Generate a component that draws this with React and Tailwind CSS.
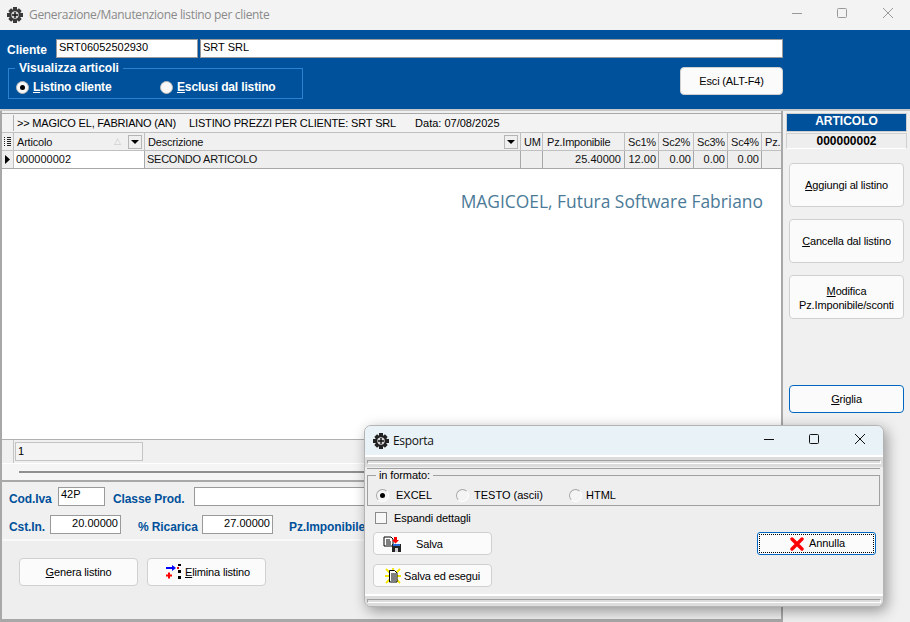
const Gear = ({ c = "text-[#222]" }) => (
  <svg viewBox="0 0 16 16" className={`w-4 h-4 shrink-0 ${c}`}>
    <g fill="currentColor">
      <circle cx="8" cy="8" r="6" />
      <rect x="6" y="0" width="4" height="16" />
      <rect x="0" y="6" width="16" height="4" />
      <rect x="6" y="0.5" width="4" height="15" transform="rotate(45 8 8)" />
      <rect x="6" y="0.5" width="4" height="15" transform="rotate(-45 8 8)" />
    </g>
    <circle cx="8" cy="8" r="3.7" fill="#d8d8d8" />
    <path d="M8 5v6M5 8h6" stroke="#111" strokeWidth="1.4" />
  </svg>
);

const U = ({ children }) => <span className="underline underline-offset-1">{children}</span>;

const Btn = ({ children, className = "" }) => (
  <div className={`flex items-center justify-center text-center bg-[#fbfbfb] border rounded-[4px] text-[11px] leading-[14px] tracking-[-0.15px] text-black ${className}`}>
    {children}
  </div>
);

const Radio = ({ on, dark }) => (
  <span className={`w-[13px] h-[13px] rounded-full shrink-0 flex items-center justify-center border ${dark ? "bg-[#f4f4f4] border-[#a8a8a8] border-r-white border-b-white" : "bg-[#f7f7f7] border-[#bbb]"}`}>
    {on && <span className="w-[5px] h-[5px] rounded-full bg-black" />}
  </span>
);

const cols = [
  ["w-[131px]", "Articolo"],
  ["w-[376px]", "Descrizione"],
  ["w-[22px]", "UM"],
  ["w-[82px]", "Pz.Imponibile"],
  ["w-[34px]", "Sc1%"],
  ["w-[35px]", "Sc2%"],
  ["w-[34px]", "Sc3%"],
  ["w-[34px]", "Sc4%"],
  ["flex-1", "Pz."],
];

const DropMini = () => (
  <span className="w-[14px] h-[14px] bg-[#efefef] border border-[#b5b5b5] flex items-center justify-center shrink-0">
    <svg viewBox="0 0 8 4" className="w-2 h-1"><path d="M0 0h8L4 4z" fill="#000" /></svg>
  </span>
);

const Groove = ({ className = "" }) => (
  <div className={`border border-[#a0a0a0] border-r-white border-b-white h-[4px] ${className}`} />
);

const Field = ({ className = "", children, right }) => (
  <div className={`h-[19px] bg-white border border-[#9a9a9a] text-[11px] leading-[15px] font-normal text-black px-[2px] ${right ? "text-right" : ""} ${className}`}>
    {children}
  </div>
);

const Label = ({ className = "", children }) => (
  <span className={`pt-[4px] tracking-[-0.1px] ${className}`}>{children}</span>
);

export default function App() {
  return (
    <div className="relative w-[910px] h-[622px] overflow-hidden bg-[#f0f0f0] text-black font-['Liberation_Sans',Arial,sans-serif]">
      {/* title bar */}
      <div className="h-[30px] flex items-center pl-[7px] bg-[#f3f3f3]">
        <Gear c="text-[#3a3a3a]" />
        <span className="ml-[6px] pb-[1px] text-[12px] text-[#8a8a8a] font-['Open_Sans',sans-serif] tracking-[-0.33px]">Generazione/Manutenzione listino per cliente</span>
        <div className="ml-auto mb-[4px] flex items-center">
          <svg viewBox="0 0 46 20" className="w-[46px] h-5"><path d="M20 10.5h10" stroke="#999" strokeWidth="1" /></svg>
          <svg viewBox="0 0 46 20" className="w-[46px] h-5"><rect x="19.5" y="5.5" width="9" height="9" rx="1" fill="none" stroke="#999" /></svg>
          <svg viewBox="0 0 46 20" className="w-[46px] h-5"><path d="M19 5l10 10M29 5L19 15" stroke="#999" /></svg>
        </div>
      </div>

      {/* blue header */}
      <div className="h-[79px] bg-[#00519b] pl-[7px] pt-[8px] pr-[127px] flex flex-col">
        <div className="flex items-center">
          <span className="w-[49px] text-white font-bold text-[12px] pt-[3px]">Cliente</span>
          <Field className="w-[142px]">SRT06052502930</Field>
          <Field className="flex-1 ml-[2px]">SRT SRL</Field>
        </div>
        <div className="flex justify-between items-start mt-[7px]">
          <fieldset className="ml-[1px] w-[295px] h-[37px] border border-[#2b82d0] pl-[6px] -mt-[4px]">
            <legend className="px-[4px] text-white font-bold text-[12px] leading-[12px]">Visualizza articoli</legend>
            <div className="flex items-center pl-[1px] pt-[4px] text-white font-bold text-[12px] tracking-[-0.15px]">
              <Radio on />
              <span className="ml-[4px] w-[127px]"><U>L</U>istino cliente</span>
              <Radio />
              <span className="ml-[4px]"><U>E</U>sclusi dal listino</span>
            </div>
          </fieldset>
          <Btn className="w-[103px] h-[28px] mt-[1px] border-[#d0d0d0]">Esci (ALT-F4)</Btn>
        </div>
      </div>

      {/* main */}
      <div className="flex h-[513px] border-t-[2px] border-[#c8c8c8]">
        {/* left column */}
        <div className="w-[783px] shrink-0 flex flex-col border-r-[2px] border-[#a8a8a8] border-l-[2px] border-b-[3px]">
          <div className="h-[19px] mt-[2px] flex items-center border-t border-[#a8a8a8] text-[11px] bg-[#f3f3f3]">
            <span className="ml-[11px] border-l border-[#b0b0b0] pl-[3px] flex tracking-[-0.2px]">
              <span>{">> MAGICO EL, FABRIANO (AN)"}</span>
              <span className="ml-[13px] tracking-[-0.15px]">LISTINO PREZZI PER CLIENTE: SRT SRL</span>
              <span className="ml-[19px] tracking-normal">Data: 07/08/2025</span>
            </span>
          </div>
          <div className="h-[19px] flex border-t border-[#c0c0c0] border-b border-[#a8a8a8] text-[11px] leading-[17px] text-[#111]">
            <div className="w-[12px] shrink-0 flex items-center justify-center border-r border-[#c0c0c0]">
              <svg viewBox="0 0 7 9" className="w-[7px] h-[9px]"><path d="M0 .5h1M3 .5h4M0 2.5h1M3 2.5h4M0 4.5h1M3 4.5h4M0 6.5h1M3 6.5h4M0 8.5h1M3 8.5h4" stroke="#222" /></svg>
            </div>
            {cols.map(([w, label], i) => (
              <div key={label} className={`${w} ${i === 8 ? "" : "shrink-0 border-r border-[#c0c0c0]"} flex items-center px-[3px] overflow-hidden`}>
                <span className={`pt-[2px] tracking-[-0.2px] ${i > 3 ? "mx-auto" : ""} ${i === 3 ? "pl-[1px]" : ""}`}>{label}</span>
                {i === 0 && <span className="ml-auto mr-[7px] text-[#c8c8c8] text-[9px]">△</span>}
                {i < 2 && <span className={i === 1 ? "ml-auto -mr-[1px]" : "-mr-[1px]"}><DropMini /></span>}
              </div>
            ))}
          </div>
          <div className="h-[18px] flex border-b border-[#a8a8a8] text-[11px] leading-[16px] text-[#111] bg-[#eeeeee]">
            <div className="w-[12px] shrink-0 flex items-center justify-center border-r border-[#c0c0c0]">
              <svg viewBox="0 0 5 9" className="w-[5px] h-[9px]"><path d="M0 0l5 4.5L0 9z" fill="#000" /></svg>
            </div>
            <div className="w-[131px] shrink-0 bg-white border-r border-[#a8a8a8] px-[2px]">000000002</div>
            <div className="w-[376px] shrink-0 border-r border-[#a8a8a8] px-[2px] tracking-[-0.25px]">SECONDO ARTICOLO</div>
            <div className="w-[22px] shrink-0 border-r border-[#a8a8a8]" />
            <div className="w-[82px] shrink-0 border-r border-[#a8a8a8] px-[3px] text-right">25.40000</div>
            <div className="w-[34px] shrink-0 border-r border-[#a8a8a8] px-[2px] text-right">12.00</div>
            <div className="w-[35px] shrink-0 border-r border-[#a8a8a8] px-[2px] text-right">0.00</div>
            <div className="w-[34px] shrink-0 border-r border-[#a8a8a8] px-[2px] text-right">0.00</div>
            <div className="w-[34px] shrink-0 border-r border-[#a8a8a8] px-[2px] text-right">0.00</div>
            <div className="flex-1" />
          </div>
          <div className="h-[270px] bg-white flex justify-end pr-[18px] pt-[20px]">
            <span className="text-[#4b7a97] text-[17.4px] leading-[24px] font-['Open_Sans',sans-serif]">MAGICOEL, Futura Software Fabriano</span>
          </div>
          <div className="h-[24px] flex items-center border-t border-[#b0b0b0] bg-[#f0f0f0]">
            <div className="w-[12px] h-full border-r border-[#c4c4c4]" />
            <div className="ml-[1px] w-[128px] h-[19px] bg-[#f3f3f3] border border-[#c4c4c4] px-[2px] text-[11px] leading-[17px]">1</div>
          </div>
          <div className="h-[19px] bg-[#f5f5f5] border-t border-white border-b-[2px] border-b-[#a8a8a8] pl-[17px] flex items-center">
            <div className="h-[2px] flex-1 bg-[#8f8f8f]" />
          </div>
          <div className="h-[57px] pl-[7px] pt-[5px] text-[#00519b] font-bold text-[12px]">
            <div className="flex items-center h-[19px]">
              <Label className="w-[49px]">Cod.Iva</Label>
              <Field className="w-[47px] !leading-[13px]">42P</Field>
              <Label className="ml-[8px] w-[81px]">Classe Prod.</Label>
              <Field className="w-[300px]" />
            </div>
            <div className="flex items-center h-[19px] mt-[9px]">
              <Label className="w-[41px]">Cst.In.</Label>
              <Field right className="w-[71px]">20.00000</Field>
              <Label className="ml-[17px] w-[64px]">% Ricarica</Label>
              <Field right className="w-[71px]">27.00000</Field>
              <Label className="ml-[16px]">Pz.Imponibile</Label>
            </div>
          </div>
          <div className="flex-1 border-t-[2px] border-[#f8f8f8] pl-[17px] pt-[17px] flex gap-[9px] items-start bg-[#eeeeee]">
            <Btn className="w-[119px] h-[28px] border-[#d0d0d0]"><span><U>G</U>enera listino</span></Btn>
            <Btn className="w-[119px] h-[28px] !justify-start pl-[17px] gap-[4px] border-[#d0d0d0]">
              <svg viewBox="0 0 16 16" className="w-4 h-4">
                <path d="M1 4h7" stroke="#0000ff" strokeWidth="2" />
                <path d="M7 1l4 3-4 3z" fill="#0000ff" />
                <path d="M1 11.5h6M4 8.5v6" stroke="#ff0000" strokeWidth="2" />
                <path d="M13 0h3v2h-3zM13 6h3v3h-3zM13 12h3v3h-3z" fill="#000" />
                <path d="M12 3h2v2h-2z" fill="#d00" />
              </svg>
              <span><U>E</U>limina listino</span>
            </Btn>
          </div>
        </div>

        {/* right column */}
        <div className="flex-1 flex flex-col pl-[3px] pr-[3px] pt-[2px]">
          <div className="h-[19px] bg-[#00519b] text-white font-bold text-[12px] leading-[15px] text-center border border-[#cfcfcf]">ARTICOLO</div>
          <div className="h-[16px] mt-[1px] border border-[#d0d0d0] border-b-white bg-[#eeeeee] font-bold text-[12px] leading-[14px] text-center">000000002</div>
          <div className="px-[3px] pt-[14px] flex flex-col gap-[12px]">
            <Btn className="h-[44px] border-[#d0d0d0]"><span><U>A</U>ggiungi al listino</span></Btn>
            <Btn className="h-[44px] border-[#d0d0d0]"><span><U>C</U>ancella dal listino</span></Btn>
            <Btn className="h-[44px] border-[#d0d0d0]"><span className="pt-[1px]"><U>M</U>odifica<br />Pz.Imponibile/sconti</span></Btn>
            <Btn className="h-[28px] mt-[54px] border-[#0067c0]"><span><U>G</U>riglia</span></Btn>
          </div>
        </div>
      </div>

      {/* dialog */}
      <div className="absolute left-[364px] top-[425px] w-[520px] h-[182px] flex flex-col rounded-[7px] overflow-hidden bg-[#eeeeee] border border-[#b4b4b4] shadow-[3px_4px_14px_rgba(0,0,0,0.38)]">
        <div className="h-[29px] shrink-0 bg-[#e9f2f7] flex items-center pl-[8px]">
          <Gear />
          <span className="ml-[4px] text-[12px] font-['Open_Sans',sans-serif] text-[#111] tracking-[-0.3px]">Esporta</span>
          <div className="ml-auto mb-[3px] flex items-center">
            <svg viewBox="0 0 46 20" className="w-[46px] h-5"><path d="M19 10.5h10" stroke="#111" /></svg>
            <svg viewBox="0 0 46 20" className="w-[46px] h-5"><rect x="18.5" y="5.5" width="9" height="9" rx="1" fill="none" stroke="#111" /></svg>
            <svg viewBox="0 0 46 20" className="w-[46px] h-5"><path d="M18 5l10 10M28 5L18 15" stroke="#111" /></svg>
          </div>
        </div>
        <div className="h-[12px] shrink-0 border-t-[2px] border-white bg-[#dcdcdc] flex items-center px-[2px]">
          <Groove className="flex-1" />
        </div>
        <div className="flex-1 pl-[2px] pr-[3px] pt-[1px] flex flex-col text-[11px]">
          <div className="border-t border-[#a0a0a0]">
            <fieldset className="h-[37px] border border-[#a0a0a0] pl-[8px]">
              <legend className="px-[3px] text-[11px] leading-[13px] tracking-[-0.1px]">in formato:</legend>
              <div className="flex items-center pt-[5px]">
                <Radio on dark />
                <span className="ml-[7px] w-[60px]">EXCEL</span>
                <Radio dark />
                <span className="ml-[5px] w-[95px]">TESTO (ascii)</span>
                <Radio dark />
                <span className="ml-[4px]">HTML</span>
              </div>
            </fieldset>
          </div>
          <div className="flex items-center mt-[5px] pl-[8px] h-[14px]">
            <span className="w-[12px] h-[12px] border border-[#8a8a8a] bg-[#f7f7f7]" />
            <span className="ml-[7px] tracking-[-0.1px]">Espandi dettagli</span>
          </div>
          <div className="flex justify-between items-start pl-[6px] pr-[4px] mt-[7px]">
            <div className="flex flex-col gap-[9px]">
              <Btn className="w-[119px] h-[23px] !justify-start pl-[9px] border-[#d0d0d0]">
                <svg viewBox="0 0 18 16" className="w-[18px] h-4">
                  <path d="M1 1h7l2 2v7H1z" fill="#fff" stroke="#000" />
                  <path d="M3 4h4M3 6h5M3 8h5" stroke="#000" />
                  <path d="M11 1h3v3h2l-3.5 3.5L9 4h2z" fill="#f00" />
                  <rect x="9" y="8" width="9" height="8" fill="#222" />
                  <rect x="10" y="8" width="7" height="2" fill="#2a6bd8" />
                  <rect x="12" y="12" width="3" height="4" fill="#ccc" />
                </svg>
                <span className="ml-[15px]">Salva</span>
              </Btn>
              <Btn className="w-[119px] h-[23px] !justify-start pl-[11px] gap-[3px] border-[#d0d0d0]">
                <svg viewBox="0 0 16 16" className="w-4 h-4 shrink-0">
                  <path d="M1 1l4 4M15 1l-4 4M1 15l4-4M15 15l-4-4M0 8h4M12 8h4M8 0v3" stroke="#f5e600" strokeWidth="1.8" />
                  <path d="M4.5 2.5h5l2.5 2.5v9H4.5z" fill="#fff" stroke="#000" />
                  <path d="M6 6h5M6 8h5M6 10h5M6 12h5" stroke="#000" />
                </svg>
                <span>Salva ed esegui</span>
              </Btn>
            </div>
            <div className="w-[119px] h-[23px] p-[1px] border border-[#0067c0] rounded-[3px] bg-[#fbfbfb]">
              <div className="h-full flex items-center justify-center gap-[5px] border border-dotted border-black pl-[2px]">
                <svg viewBox="0 0 14 14" className="w-[14px] h-[14px]"><path d="M2 2l10 10M12 2L2 12" stroke="#f00" strokeWidth="3.4" strokeLinecap="round" /></svg>
                <span className="tracking-[-0.1px]">Annulla</span>
              </div>
            </div>
          </div>
        </div>
        <div className="h-[12px] shrink-0 border-t-[2px] border-white bg-[#dcdcdc] flex items-center px-[2px]">
          <Groove className="flex-1" />
        </div>
      </div>
    </div>
  );
}
